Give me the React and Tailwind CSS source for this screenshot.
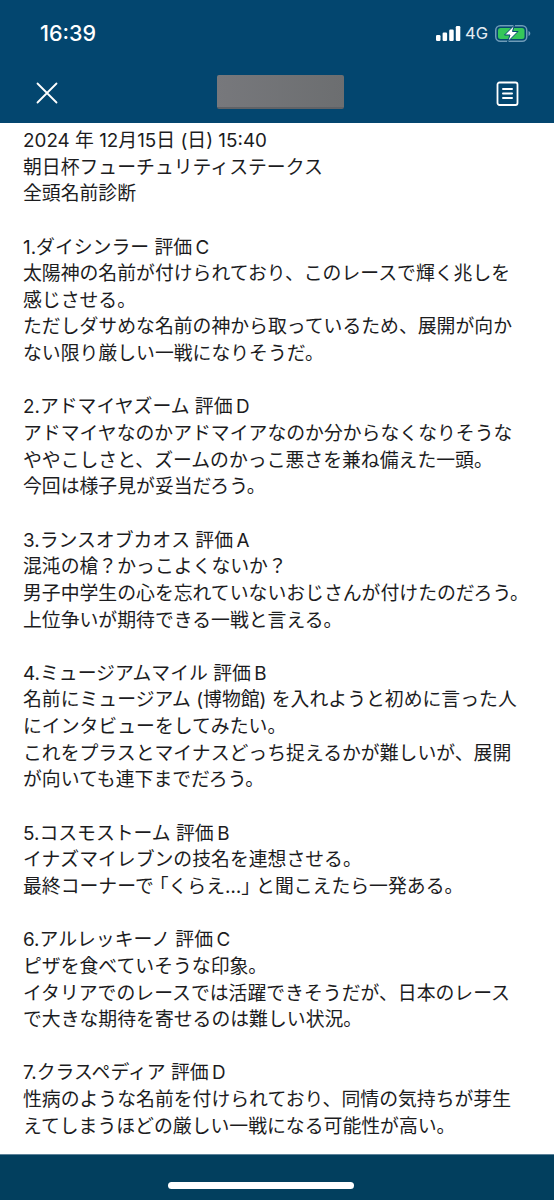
const lines = [
  "2024 年 12月15日 (日) 15:40",
  "朝日杯フューチュリティステークス",
  "全頭名前診断",
  "",
  "1.ダイシンラー 評価\u2009C",
  "太陽神の名前が付けられており、このレースで輝く兆しを",
  "感じさせる。",
  "ただしダサめな名前の神から取っているため、展開が向か",
  "ない限り厳しい一戦になりそうだ。",
  "",
  "2.アドマイヤズーム 評価\u2009D",
  "アドマイヤなのかアドマイアなのか分からなくなりそうな",
  "ややこしさと、ズームのかっこ悪さを兼ね備えた一頭。",
  "今回は様子見が妥当だろう。",
  "",
  "3.ランスオブカオス 評価\u2009A",
  "混沌の槍？かっこよくないか？",
  "男子中学生の心を忘れていないおじさんが付けたのだろう。",
  "上位争いが期待できる一戦と言える。",
  "",
  "4.ミュージアムマイル 評価\u2009B",
  "名前にミュージアム (博物館) を入れようと初めに言った人",
  "にインタビューをしてみたい。",
  "これをプラスとマイナスどっち捉えるかが難しいが、展開",
  "が向いても連下までだろう。",
  "",
  "5.コスモストーム 評価\u2009B",
  "イナズマイレブンの技名を連想させる。",
  <>最終コーナーで <span className="[font-feature-settings:'halt']">「</span>くらえ…<span className="[font-feature-settings:'halt']">」</span> と聞こえたら一発ある。</>,
  "",
  "6.アルレッキーノ 評価\u2009C",
  "ピザを食べていそうな印象。",
  "イタリアでのレースでは活躍できそうだが、日本のレース",
  "で大きな期待を寄せるのは難しい状況。",
  "",
  "7.クラスペディア 評価\u2009D",
  "性病のような名前を付けられており、同情の気持ちが芽生",
  "えてしまうほどの厳しい一戦になる可能性が高い。",
];

export default function App() {
  return (
    <div className="flex h-[1200px] w-[554px] flex-col overflow-hidden bg-white font-['Inter','Noto_Sans_CJK_JP',sans-serif]">
      <header className="flex h-[123px] shrink-0 flex-col bg-[#03466f] text-white">
        <div className="flex h-[66px] items-center justify-between pl-[40px] pr-[23px] pt-[1px]">
          <span className="text-[21.5px] font-medium leading-none">16:39</span>
          <div className="flex items-center gap-[6px]">
            <svg width="25" height="15" viewBox="0 0 25 15" fill="white" className="mr-[-2px]">
              <rect x="0" y="9" width="4.5" height="6" rx="1.2" />
              <rect x="6.6" y="6.5" width="4.5" height="8.5" rx="1.2" />
              <rect x="13.2" y="3.5" width="4.5" height="11.5" rx="1.2" />
              <rect x="19.8" y="0" width="4.5" height="15" rx="1.2" />
            </svg>
            <span className="text-[16.5px] leading-none text-[#e4edf3]">4G</span>
            <svg width="36" height="17" viewBox="0 0 36 17" className="ml-[1px]">
              <rect x="0.75" y="0.75" width="31" height="15.5" rx="4.5" fill="none" stroke="#6f9bb8" strokeWidth="1.5" />
              <rect x="3" y="3" width="26.5" height="11" rx="2.5" fill="#35c759" />
              <path d="M33.5 6v5c1.2-.4 1.8-1.4 1.8-2.5S34.700 6.400 33.500 6z" fill="#6f9bb8" />
              <path d="M19.500 0 9.500 10h5.500l-2.500 7 10.500-10.500h-5.500z" fill="white" stroke="#03466f" strokeWidth="1" />
            </svg>
          </div>
        </div>
        <div className="flex flex-1 items-start justify-between pl-[36px] pr-[35px] pt-[9px]">
          <svg width="22" height="22" viewBox="0 0 22 22" className="mt-[7px]" fill="none" stroke="white" strokeWidth="1.8" strokeLinecap="round">
            <path d="M1.500 1.500 20.500 20.500M20.500 1.500 1.500 20.500" />
          </svg>
          <div className="ml-[7px] h-[34px] w-[127px] rounded-[2px] border-b-[2px] border-[#606266] bg-gradient-to-r from-[#77787c] to-[#6c6e70]" />
          <svg width="23" height="25" viewBox="0 0 23 25" className="mt-[6px]" fill="none" stroke="white" strokeWidth="1.8" strokeLinecap="round">
            <rect x="1.500" y="1.500" width="20" height="22.500" rx="2" />
            <path d="M7 8h9M7 12.500h9M7 17h9" strokeWidth="2" />
          </svg>
        </div>
      </header>
      <main className="min-h-0 flex-1 pl-[23px] pt-[5px] text-[18.85px] leading-[26.65px] text-[#1c1c1e]">
        {lines.map((line, i) => (
          <div key={i} className="h-[26.65px] whitespace-nowrap">
            {line}
          </div>
        ))}
      </main>
      <footer className="flex h-[46px] shrink-0 items-start border-t border-[#5d8299] bg-[#023f5e] pl-[168px] pt-[27px]">
        <div className="h-[7px] w-[186px] rounded-full bg-white" />
      </footer>
    </div>
  );
}
